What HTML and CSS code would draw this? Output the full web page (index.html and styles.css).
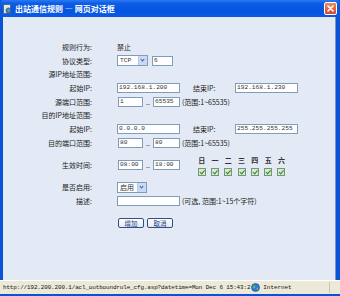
FILE: index.html
```html
<!DOCTYPE html>
<html lang="zh-CN">
<head>
    <meta charset="UTF-8">
    <title>出站通信规则 -- 网页对话框</title>
    <link rel="stylesheet" href="styles.css">
</head>
<body>
    <div class="window">
        <div class="titlebar">
            <svg class="app-icon" width="9" height="10" viewBox="0 0 9 10">
                <rect x="0.5" y="0.5" width="7" height="9" fill="#dfe6ee" stroke="#56687c"/>
                <circle cx="5.5" cy="6.5" r="2.6" fill="#3f7fc4" stroke="#24508a" stroke-width="0.6"/>
                <path d="M4.2 6.2 L6.2 5.4 L6.6 7.4 Z" fill="#6cbf4a"/>
            </svg>
            <span class="title">出站通信规则 — 网页对话框</span>
            <span class="close-btn">
                <svg width="7" height="7" viewBox="0 0 7 7">
                    <path d="M1 1 L6 6 M6 1 L1 6" stroke="#fff" stroke-width="1.6" stroke-linecap="round"/>
                </svg>
            </span>
        </div>

        <div class="client">
            <div class="form">
                <div class="row">
                    <div class="label">规则行为:</div>
                    <div class="value">禁止</div>
                </div>
                <div class="row">
                    <div class="label">协议类型:</div>
                    <div class="value">
                        <span class="select sel-proto">TCP<span class="drop"></span></span>
                        <span class="input w-proto">6</span>
                    </div>
                </div>
                <div class="row">
                    <div class="label">源IP地址范围:</div>
                </div>
                <div class="row">
                    <div class="label">起始IP:</div>
                    <div class="value">
                        <span class="input w-ip">192.168.1.200</span>
                        <span class="sub-label">结束IP:</span>
                        <span class="input w-ip2">192.168.1.230</span>
                    </div>
                </div>
                <div class="row">
                    <div class="label">源端口范围:</div>
                    <div class="value">
                        <span class="input w-port">1</span>
                        <span class="dots">..</span>
                        <span class="input w-port2">65535</span>
                        <span class="hint">(范围:1~65535)</span>
                    </div>
                </div>
                <div class="row">
                    <div class="label">目的IP地址范围:</div>
                </div>
                <div class="row">
                    <div class="label">起始IP:</div>
                    <div class="value">
                        <span class="input w-ip">0.0.0.0</span>
                        <span class="sub-label">结束IP:</span>
                        <span class="input w-ip2">255.255.255.255</span>
                    </div>
                </div>
                <div class="row">
                    <div class="label">目的端口范围:</div>
                    <div class="value">
                        <span class="input w-port">80</span>
                        <span class="dots">..</span>
                        <span class="input w-port2">80</span>
                        <span class="hint">(范围:1~65535)</span>
                    </div>
                </div>
                <div class="row row-time">
                    <div class="label">生效时间:</div>
                    <div class="value">
                        <span class="input w-port">08:00</span>
                        <span class="dots">..</span>
                        <span class="input w-port2">18:00</span>
                        <div class="days">
                            <span>日</span><span>一</span><span>二</span><span>三</span><span>四</span><span>五</span><span>六</span>
                            <i class="check"></i><i class="check"></i><i class="check"></i><i class="check"></i><i class="check"></i><i class="check"></i><i class="check"></i>
                        </div>
                    </div>
                </div>
                <div class="row row-enable">
                    <div class="label">是否启用:</div>
                    <div class="value">
                        <span class="select sel-enable">启用<span class="drop"></span></span>
                    </div>
                </div>
                <div class="row">
                    <div class="label">描述:</div>
                    <div class="value">
                        <span class="input w-ip"></span>
                        <span class="hint">(可选, 范围:1~15个字符)</span>
                    </div>
                </div>
                <div class="buttons">
                    <span class="btn">增加</span>
                    <span class="btn">取消</span>
                </div>
            </div>
        </div>

        <div class="statusbar">
            <span class="url">http://192.200.200.1/acl_outboundrule_cfg.asp?datetime=Mon Dec 6 15:43:2</span>
            <svg class="globe" width="9" height="9" viewBox="0 0 9 9">
                <circle cx="4.5" cy="4.5" r="4" fill="#2f7ad0" stroke="#1d4f95" stroke-width="0.6"/>
                <path d="M2 3 C3 2 4 2.5 4.5 3.5 C4 5 3 5 2.5 6 Z M5.5 5 C6.5 4.5 7.5 5 7 6.5 C6 7.5 5.5 6.5 5.5 5 Z" fill="#6dc04e"/>
            </svg>
            <span class="zone">Internet</span>
            <span class="grip"></span>
        </div>
    </div>
</body>
</html>
```

FILE: styles.css
```css
body {
    margin: 0;
    font-family: "Noto Sans CJK SC", "DejaVu Sans", sans-serif;
    background: #fff;
}

.window {
    width: 340px;
    height: 296px;
    display: flex;
    flex-direction: column;
    background: #0a52d6;
    box-sizing: border-box;
    padding: 0 4px 2px 3px;
}

/* title bar */
.titlebar {
    height: 17px;
    margin: 0 -4px 0 -3px;
    padding: 0 3px;
    display: flex;
    align-items: center;
    background: linear-gradient(#2a7af0 0%, #0c5ce6 20%, #0555e0 60%, #0a5ae6 100%);
    border-radius: 4px 4px 0 0;
}

.app-icon {
    margin-right: 3px;
}

.title {
    flex: 1;
    color: #fff;
    font-size: 8px;
    font-weight: bold;
    line-height: 17px;
}

.close-btn {
    width: 11px;
    height: 11px;
    border: 1px solid #fff;
    border-radius: 2px;
    background: linear-gradient(#ef8a5c, #d8472a);
    display: flex;
    align-items: center;
    justify-content: center;
}

/* client area */
.client {
    flex: 1;
    background: #e3eaf5;
    border-right: 1px solid #7a96c4;
}

.form {
    padding-top: 23px;
    font-size: 7px;
    color: #1a1a1a;
}

.row {
    display: flex;
    align-items: center;
    height: 13.7px;
}

.label {
    width: 89px;
    text-align: right;
    white-space: nowrap;
}

.value {
    margin-left: 25px;
    display: flex;
    align-items: center;
    white-space: nowrap;
}

.input,
.select {
    display: inline-block;
    box-sizing: border-box;
    height: 10px;
    background: #fff;
    border: 1px solid #7f9db9;
    font-family: "Liberation Mono", monospace;
    font-size: 6.2px;
    line-height: 8px;
    padding-left: 1px;
    color: #333;
}

.select {
    position: relative;
    height: 11px;
    line-height: 9px;
    padding-left: 2px;
}

.sel-enable {
    font-family: "Noto Sans CJK SC", sans-serif;
    font-size: 7px;
}

.drop {
    position: absolute;
    right: 0;
    top: 0;
    width: 8px;
    height: 9px;
    background: #c9daf8;
    border-left: 1px solid #b4c8ec;
}

.drop::after {
    content: "";
    position: absolute;
    left: 2px;
    top: 2px;
    width: 2px;
    height: 2px;
    border-right: 1px solid #4d6185;
    border-bottom: 1px solid #4d6185;
    transform: rotate(45deg);
}

.sel-proto { width: 31px; }
.sel-enable { width: 30px; }
.w-proto { width: 21px; margin-left: 4px; }
.w-ip { width: 63px; }
.w-ip2 { width: 63px; }
.w-port { width: 25px; margin-left: 1px; }
.w-port2 { width: 27px; }

.sub-label {
    margin-left: 13px;
    width: 42px;
}

.dots {
    width: 10px;
    text-align: center;
    line-height: 6px;
}

.hint {
    margin-left: 2px;
}

.row-time {
    height: 27px;
    margin-top: 2px;
}

.days {
    display: grid;
    grid-template-columns: repeat(7, 13.3px);
    justify-items: center;
    row-gap: 3px;
    margin-left: 15px;
    margin-top: 1px;
    font-weight: bold;
    color: #333;
}

.check {
    width: 6px;
    height: 6px;
    border: 1px solid #6f9a6a;
    background: #dde4dc;
    position: relative;
}

.check::after {
    content: "";
    position: absolute;
    left: 2px;
    top: 0;
    width: 1.5px;
    height: 3.5px;
    border-right: 1px solid #2a8a2a;
    border-bottom: 1px solid #2a8a2a;
    transform: rotate(40deg);
}

.row-enable {
    margin-top: 2px;
}

.buttons {
    display: flex;
    gap: 3px;
    margin: 10px 0 0 115px;
}

.btn {
    box-sizing: border-box;
    width: 26px;
    height: 10px;
    border: 1px solid #2f4f86;
    border-radius: 2px;
    background: linear-gradient(#fff, #e6e9ef);
    color: #1b3b8a;
    font-size: 6.5px;
    line-height: 8px;
    text-align: center;
}

/* status bar */
.statusbar {
    height: 13px;
    margin: 0 -4px 0 -3px;
    padding-left: 3px;
    display: flex;
    align-items: center;
    background: #ece9d8;
    border-top: 1px solid #fff;
    font-family: "Liberation Mono", monospace;
    font-size: 5.9px;
    color: #111;
    white-space: nowrap;
}

.url {
    letter-spacing: -0.1px;
}

.globe {
    margin-left: 1px;
    margin-right: 3px;
}

.zone {
    flex: 1;
}

.grip {
    width: 8px;
    height: 11px;
    border-left: 1px solid #c8c5b4;
    margin-right: 2px;
}
```
